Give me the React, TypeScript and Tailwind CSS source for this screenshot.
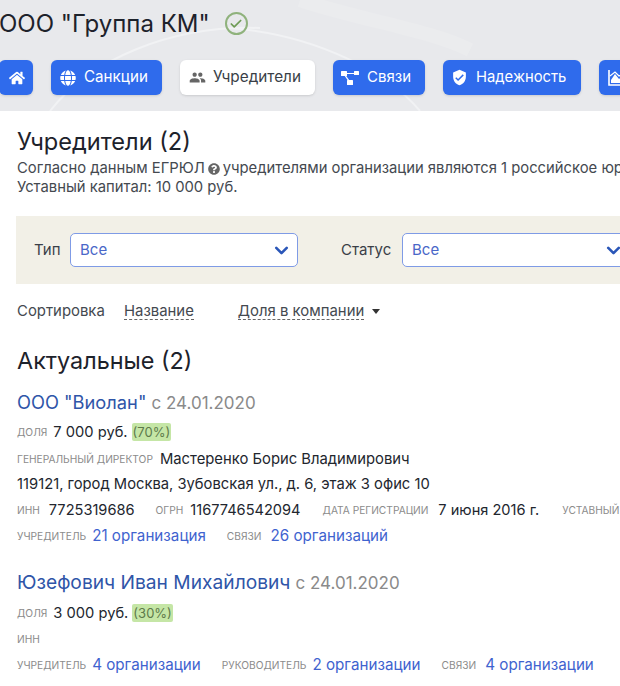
import { Check, ChevronDown } from "lucide-react";
import { FaGlobe, FaHome, FaQuestionCircle } from "react-icons/fa";
import { MdPeople, MdVerifiedUser } from "react-icons/md";
import type { ReactNode } from "react";

function NavButton({ icon, label, className }: { icon: ReactNode; label: string; className: string }) {
  return (
    <div className={`flex h-[35px] shrink-0 items-center gap-[8px] rounded-[6px] bg-[#2f6bec] text-white shadow-sm ${className}`}>
      {icon}
      {label && <span>{label}</span>}
    </div>
  );
}

function LinksIcon() {
  return (
    <svg width="18" height="16" viewBox="0 0 18 16" fill="white">
      <rect x="0" y="1" width="6" height="5" rx="0.5" />
      <rect x="13" y="1" width="5" height="4" rx="0.5" />
      <rect x="6" y="10" width="6" height="5" rx="0.5" />
      <path d="M5 3h8v1H5zM3 5l1-.7 5 7-1 .7z" />
    </svg>
  );
}

function ChartIcon() {
  return (
    <svg width="20" height="18" viewBox="0 0 20 18" className="shrink-0">
      <path d="M1 1v15h18" fill="none" stroke="white" strokeWidth="1.6" />
      <path d="M3 14V11L7 5l4 5 4-3 4 2v5z" fill="white" />
      <path d="M2 7l5-4 4 4 4-2 4 2" fill="none" stroke="white" strokeWidth="1.2" />
    </svg>
  );
}

function Label({ children, className = "" }: { children: ReactNode; className?: string }) {
  return <span className={`text-[10.2px] uppercase text-[#8b8b8b] ${className}`}>{children}</span>;
}

function Select({ className }: { className: string }) {
  return (
    <div className={`flex h-[34px] items-center justify-between rounded-[5px] border border-[#7f9be6] bg-white pl-[9px] pr-[5px] text-[15px] text-[#4a67c8] ${className}`}>
      <span>Все</span>
      <ChevronDown size={21} strokeWidth={3} className="text-[#2a56b8]" />
    </div>
  );
}

function Link({ children }: { children: ReactNode }) {
  return <span className="text-[15.2px] text-[#3f63cf]">{children}</span>;
}

export default function App() {
  return (
    <div className="h-[686px] w-[620px] overflow-hidden bg-white font-['Inter',sans-serif] whitespace-nowrap text-[#22262e]">
      <header className="relative h-[111px] overflow-hidden bg-[#e8e9ec]">
        <svg className="absolute inset-0" width="620" height="111" fill="none" stroke="#f1f2f4" strokeWidth="2">
          <path d="M50 111C90 60 170 25 260 28" />
          <path d="M230 28C320 35 390 75 420 111" />
          <path d="M300 0C360 20 430 30 470 50" strokeWidth="14" stroke="#ebecee" />
        </svg>
        <div className="relative flex h-[60px] items-center gap-[15px] pb-[13px] pl-0">
          <h1 className="-ml-px text-[24px] leading-none text-[#1d222b]">ООО "Группа КМ"</h1>
          <div className="flex h-[23px] w-[23px] items-center justify-center rounded-full border-2 border-[#8fb27c]">
            <Check size={14} strokeWidth={3} className="text-[#6f9c56]" />
          </div>
        </div>
        <nav className="relative flex gap-[18px]">
          <NavButton className="-ml-px w-[34px] justify-center pl-px" label="" icon={<FaHome size={16} />} />
          <NavButton className="w-[111px] pl-[9px] text-[15.2px]" label="Санкции" icon={<FaGlobe size={16} />} />
          <div className="flex h-[35px] w-[135px] shrink-0 items-center gap-[7px] rounded-[6px] bg-white pl-[9px] text-[15.3px] text-[#3a3f47] shadow-sm">
            <MdPeople size={17} className="text-[#666]" />
            <span>Учредители</span>
          </div>
          <NavButton className="w-[92px] pl-[8px] text-[15px]" label="Связи" icon={<LinksIcon />} />
          <NavButton className="w-[138px] pl-[8px] text-[14.8px]" label="Надежность" icon={<MdVerifiedUser size={17} />} />
          <NavButton className="w-[60px] pl-[9px]" label="" icon={<ChartIcon />} />
        </nav>
      </header>

      <main className="pl-[17px]">
        <h2 className="mt-[16px] text-[23.6px] leading-[30px] text-[#1d222b]">Учредители (2)</h2>
        <p className="mt-[2px] flex items-center gap-[3px] text-[14.8px] leading-[19px] text-[#444950]">
          Согласно данным ЕГРЮЛ
          <FaQuestionCircle size={12} className="shrink-0 text-[#666]" />
          учредителями организации являются 1 российское юридическое лицо
        </p>
        <p className="text-[14.8px] leading-[19px] text-[#444950]">Уставный капитал: 10 000 руб.</p>

        <div className="-mr-[20px] mt-[19px] ml-[-1px] flex h-[68px] items-center bg-[#f2f0e7] pl-[18px] text-[15px] text-[#3a3f47]">
          <span className="w-[36px]">Тип</span>
          <Select className="w-[228px]" />
          <span className="ml-[43px] w-[61px]">Статус</span>
          <Select className="w-[228px] shrink-0" />
        </div>

        <div className="mt-[17px] flex items-center text-[14.9px] leading-[20px] text-[#444950]">
          <span className="w-[107px]">Сортировка</span>
          <span className="border-b border-dashed border-[#666] leading-[16px]">Название</span>
          <span className="ml-[44px] border-b border-dashed border-[#666] leading-[16px]">Доля в компании</span>
          <span className="ml-[8px] h-0 w-0 border-x-[4px] border-t-[5px] border-x-transparent border-t-[#333]" />
        </div>

        <h2 className="mt-[25px] text-[23.4px] leading-[30px] text-[#1d222b]">Актуальные (2)</h2>

        <div className="mt-[13px] flex items-baseline gap-[5px] text-[18.3px] leading-[26px]">
          <span className="text-[#2f55a8]">ООО "Виолан"</span>
          <span className="text-[17px] text-[#8a8a8a]">с 24.01.2020</span>
        </div>
        <div className="mt-[3px] flex items-center gap-[6px] text-[14.7px] leading-[26px]">
          <Label>доля</Label>
          <span>7 000 руб.</span>
          <span className="-ml-[2px] rounded-[2px] bg-[#c5e6a6] px-[1px] text-[13px] leading-[18px] text-[#5d7a4a]">(70%)</span>
        </div>
        <div className="mt-[1px] flex items-center gap-[7px] text-[14.8px] leading-[26px]">
          <Label>генеральный директор</Label>
          <span>Мастеренко Борис Владимирович</span>
        </div>
        <div className="text-[14.75px] leading-[25px]">119121, город Москва, Зубовская ул., д. 6, этаж 3 офис 10</div>
        <div className="flex items-center text-[14.6px] leading-[26px]">
          <Label className="mr-[9px]">инн</Label>
          <span>7725319686</span>
          <Label className="ml-[21px] mr-[7px]">огрн</Label>
          <span>1167746542094</span>
          <Label className="ml-[22px] mr-[10px]">дата регистрации</Label>
          <span>7 июня 2016 г.</span>
          <Label className="ml-[23px]">уставный</Label>
        </div>
        <div className="flex items-center text-[15px] leading-[26px]">
          <Label className="mr-[6px]">учредитель</Label>
          <Link>21 организация</Link>
          <Label className="ml-[21px] mr-[9px]">связи</Label>
          <Link>26 организаций</Link>
        </div>

        <div className="mt-[20px] flex items-baseline gap-[5px] text-[19.2px] leading-[26px]">
          <span className="text-[#2f55a8]">Юзефович Иван Михайлович</span>
          <span className="text-[17px] text-[#8a8a8a]">с 24.01.2020</span>
        </div>
        <div className="mt-[4px] flex items-center gap-[6px] text-[14.7px] leading-[26px]">
          <Label>доля</Label>
          <span>3 000 руб.</span>
          <span className="-ml-[2px] rounded-[2px] bg-[#c5e6a6] px-[1px] text-[13px] leading-[18px] text-[#5d7a4a]">(30%)</span>
        </div>
        <div className="flex items-center text-[15px] leading-[26px]">
          <Label>инн</Label>
        </div>
        <div className="flex items-center text-[15px] leading-[26px]">
          <Label className="mr-[6px]">учредитель</Label>
          <Link>4 организации</Link>
          <Label className="ml-[21px] mr-[6px]">руководитель</Label>
          <Link>2 организации</Link>
          <Label className="ml-[21px] mr-[9px]">связи</Label>
          <Link>4 организации</Link>
        </div>
      </main>
    </div>
  );
}
